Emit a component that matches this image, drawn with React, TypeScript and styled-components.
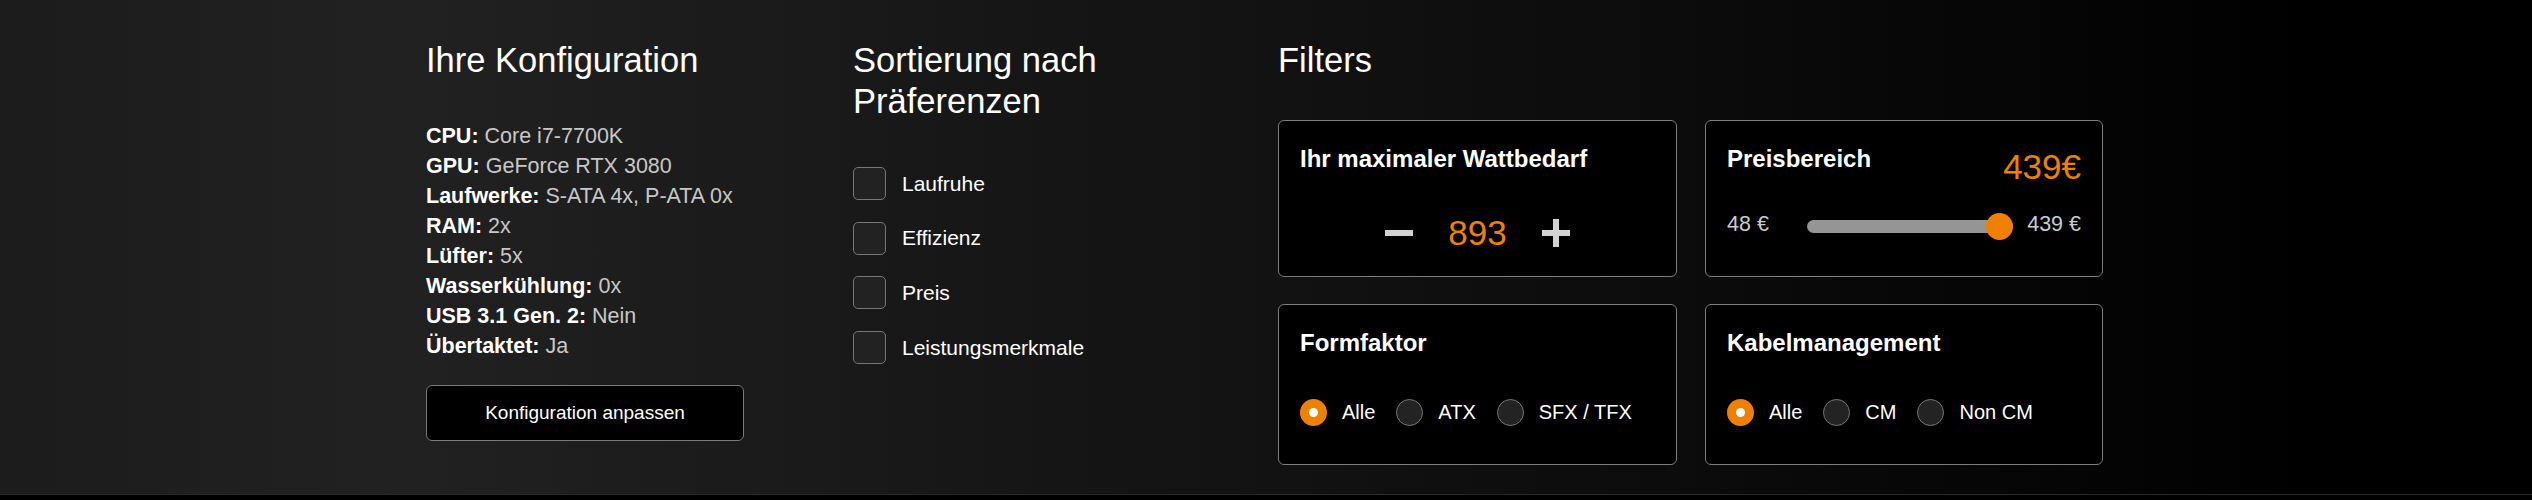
import React from 'react'
import styled, { createGlobalStyle } from 'styled-components'

const GlobalStyle = createGlobalStyle`
  html, body {
    margin: 0;
    padding: 0;
    background: #000;
    font-family: "Liberation Sans", Arial, sans-serif;
  }
  * { box-sizing: border-box; }
`

const ORANGE = '#f08000'

const Page = styled.main`
  height: 494px;
  background: linear-gradient(90deg, #1c1c1c 0%, #212121 16%, #161616 40%, #0c0c0c 65%, #000 92%);
`

const Footer = styled.div`
  height: 6px;
  background: #000;
  border-top: 1px solid #2a2a2a;
`

const Container = styled.div`
  width: 1680px;
  margin: 0 auto;
  padding-top: 39.5px;
  display: grid;
  grid-template-columns: 427px 425px 1fr;
`

const Column = styled.section`
  display: flex;
  flex-direction: column;
  align-items: flex-start;
`

const Heading = styled.h2`
  margin: 0;
  font-weight: 400;
  font-size: 34.5px;
  line-height: 41px;
  color: #fff;
  max-width: 300px;
`

const Specs = styled.ul`
  list-style: none;
  margin: 40px 0 0;
  padding: 0;
  font-size: 21.5px;
  line-height: 30px;
`

const SpecLabel = styled.strong`
  font-weight: 700;
  color: #fff;
`

const SpecValue = styled.span`
  color: #c8c8c8;
`

const OutlineButton = styled.button`
  margin-top: 24px;
  width: 318px;
  height: 56px;
  background: #000;
  border: 1px solid #7a7a7a;
  border-radius: 6px;
  color: #fff;
  font-family: inherit;
  font-size: 19px;
`

const Checks = styled.div`
  margin-top: 45.5px;
  display: flex;
  flex-direction: column;
  gap: 21.7px;
`

const CheckRow = styled.label`
  display: flex;
  align-items: center;
  gap: 16px;
  font-size: 21px;
  color: #fff;
`

const Box = styled.span`
  width: 33px;
  height: 33px;
  border: 1px solid #777;
  border-radius: 5px;
  background: #222;
`

const CardGrid = styled.div`
  margin-top: 39.5px;
  display: grid;
  grid-template-columns: 399px 398px;
  grid-template-rows: 157px 161px;
  column-gap: 28px;
  row-gap: 27px;
`

const Card = styled.div`
  background: #000;
  border: 1px solid #7e7e7e;
  border-radius: 6px;
  padding: 24px 21px 0;
  display: flex;
  flex-direction: column;
`

const CardTitle = styled.h3`
  margin: 0;
  font-size: 24px;
  line-height: 28px;
  font-weight: 700;
  color: #fff;
`

const Stepper = styled.div`
  margin-top: 40px;
  display: flex;
  justify-content: center;
  align-items: center;
  gap: 35px;
`

const StepButton = styled.button`
  padding: 0;
  border: none;
  background: none;
  display: flex;
  width: 28px;
  height: 28px;
`

const OrangeValue = styled.span<{ $size: number }>`
  color: ${ORANGE};
  font-size: ${p => p.$size}px;
  line-height: 40px;
`

const PriceHead = styled.div`
  display: flex;
  justify-content: space-between;
  align-items: flex-start;
  ${OrangeValue} { margin-top: 2px; }
`

const SliderRow = styled.div`
  margin-top: 26px;
  display: flex;
  align-items: center;
  height: 27px;
`

const SliderLabel = styled.span`
  color: #c8ccd4;
  font-size: 21.5px;
  line-height: 26px;
  margin-bottom: 5px;
`

const Track = styled.div`
  position: relative;
  flex: 1;
  height: 13px;
  margin: 0 14px 0 38px;
  border-radius: 7px;
  background: #959595;
`

const Thumb = styled.span`
  position: absolute;
  right: 0;
  top: 50%;
  width: 27px;
  height: 27px;
  margin-top: -13.5px;
  border-radius: 50%;
  background: ${ORANGE};
`

const RadioRow = styled.div`
  margin-top: 41.5px;
  display: flex;
  align-items: center;
  gap: 21px;
`

const RadioItem = styled.label`
  display: flex;
  align-items: center;
  gap: 15px;
  font-size: 20px;
  color: #fff;
`

const Dot = styled.span<{ $on: boolean }>`
  width: 27px;
  height: 27px;
  border-radius: 50%;
  display: flex;
  align-items: center;
  justify-content: center;
  background: ${p => (p.$on ? ORANGE : '#232323')};
  border: ${p => (p.$on ? 'none' : '1.5px solid #777')};
  &::after {
    content: '';
    display: ${p => (p.$on ? 'block' : 'none')};
    width: 9px;
    height: 9px;
    border-radius: 50%;
    background: #fff;
  }
`

const specs: [string, string][] = [
  ['CPU:', 'Core i7-7700K'],
  ['GPU:', 'GeForce RTX 3080'],
  ['Laufwerke:', 'S-ATA 4x, P-ATA 0x'],
  ['RAM:', '2x'],
  ['Lüfter:', '5x'],
  ['Wasserkühlung:', '0x'],
  ['USB 3.1 Gen. 2:', 'Nein'],
  ['Übertaktet:', 'Ja'],
]

const prefs = ['Laufruhe', 'Effizienz', 'Preis', 'Leistungsmerkmale']

function Minus() {
  return (
    <svg width="28" height="28" viewBox="0 0 28 28">
      <rect x="0" y="11" width="28" height="6" fill="#d2d2d2" />
    </svg>
  )
}

function Plus() {
  return (
    <svg width="28" height="28" viewBox="0 0 28 28">
      <rect x="0" y="11" width="28" height="6" fill="#d2d2d2" />
      <rect x="11" y="0" width="6" height="28" fill="#d2d2d2" />
    </svg>
  )
}

function RadioGroup({ options }: { options: string[] }) {
  return (
    <RadioRow>
      {options.map((o, i) => (
        <RadioItem key={o}>
          <Dot $on={i === 0} />
          {o}
        </RadioItem>
      ))}
    </RadioRow>
  )
}

export default function App() {
  return (
    <>
      <GlobalStyle />
      <Page>
        <Container>
          <Column>
            <Heading>Ihre Konfiguration</Heading>
            <Specs>
              {specs.map(([k, v]) => (
                <li key={k}>
                  <SpecLabel>{k}</SpecLabel> <SpecValue>{v}</SpecValue>
                </li>
              ))}
            </Specs>
            <OutlineButton>Konfiguration anpassen</OutlineButton>
          </Column>

          <Column>
            <Heading>Sortierung nach Präferenzen</Heading>
            <Checks>
              {prefs.map(p => (
                <CheckRow key={p}>
                  <Box />
                  {p}
                </CheckRow>
              ))}
            </Checks>
          </Column>

          <Column>
            <Heading>Filters</Heading>
            <CardGrid>
              <Card>
                <CardTitle>Ihr maximaler Wattbedarf</CardTitle>
                <Stepper>
                  <StepButton><Minus /></StepButton>
                  <OrangeValue $size={35}>893</OrangeValue>
                  <StepButton><Plus /></StepButton>
                </Stepper>
              </Card>
              <Card>
                <PriceHead>
                  <CardTitle>Preisbereich</CardTitle>
                  <OrangeValue $size={35}>439€</OrangeValue>
                </PriceHead>
                <SliderRow>
                  <SliderLabel>48 €</SliderLabel>
                  <Track><Thumb /></Track>
                  <SliderLabel>439 €</SliderLabel>
                </SliderRow>
              </Card>
              <Card>
                <CardTitle>Formfaktor</CardTitle>
                <RadioGroup options={['Alle', 'ATX', 'SFX / TFX']} />
              </Card>
              <Card>
                <CardTitle>Kabelmanagement</CardTitle>
                <RadioGroup options={['Alle', 'CM', 'Non CM']} />
              </Card>
            </CardGrid>
          </Column>
        </Container>
      </Page>
      <Footer />
    </>
  )
}
